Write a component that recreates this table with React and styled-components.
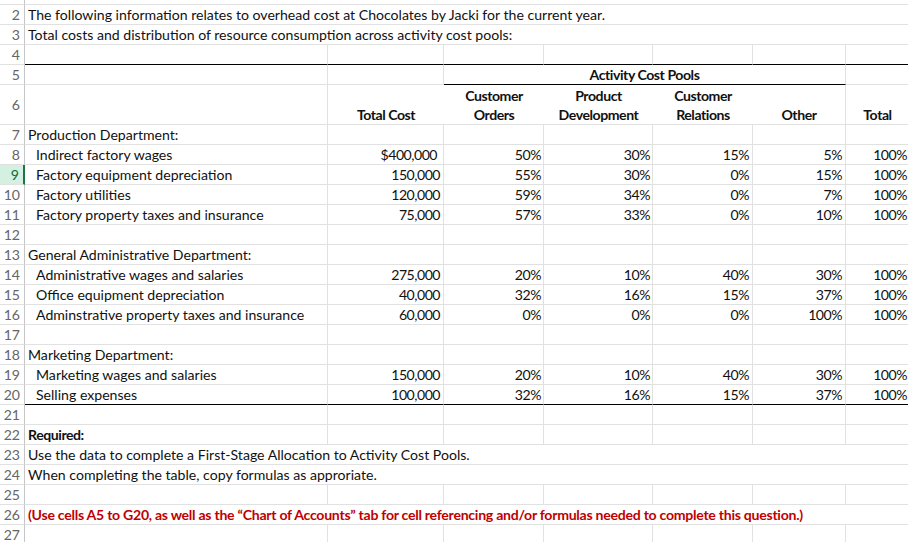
import styled, { createGlobalStyle } from 'styled-components';

const GlobalStyle = createGlobalStyle`
    body {
        margin: 0;
        overflow: hidden;
        background: #ffffff;
        font-family: 'Lato', 'Liberation Sans', sans-serif;
        font-size: 14.1px;
        color: #111;
    }
`;

const GRID = '#e1e1e1';

const Sheet = styled.div`
    width: 910px;
`;

const Row = styled.div`
    display: grid;
    grid-template-columns: 25px 303px 116px 100px 109px 100px 93px 64px;
    grid-template-rows: ${(p) => p.$h || 20}px;
    height: ${(p) => p.$h || 20}px;
`;

const RowHead = styled.div`
    box-sizing: border-box;
    display: flex;
    align-items: center;
    justify-content: flex-end;
    padding-right: 4px;
    color: ${(p) => (p.$active ? '#0b6a36' : '#666')};
    background: ${(p) => (p.$active ? '#d3f0e0' : '#fff')};
    border-right: ${(p) => (p.$active ? '2px solid #217346' : '1px solid #c6c6c6')};
    border-bottom: 1px solid ${GRID};
`;

const Cell = styled.div`
    box-sizing: border-box;
    grid-column: ${(p) => p.$span || 'auto'};
    padding: 0 ${(p) => p.$pr ?? 3}px 0 ${(p) => p.$pl ?? 3}px;
    line-height: 19px;
    white-space: nowrap;
    text-align: ${(p) => p.$align || 'left'};
    font-weight: ${(p) => (p.$bold ? 700 : 400)};
    letter-spacing: ${(p) => p.$ls || (p.$bold ? '-0.45px' : 'normal')};
    color: ${(p) => p.$color || '#111'};
    border-right: ${(p) => (p.$noRight ? 'none' : `1px solid ${GRID}`)};
    border-bottom: 1px solid ${(p) => (p.$line ? '#000' : GRID)};
`;

const NumCell = styled(Cell)`
    text-align: right;
    letter-spacing: -0.5px;
`;

const HeadCell = styled(Cell)`
    display: flex;
    flex-direction: column;
    justify-content: flex-end;
    align-items: center;
    font-weight: 700;
    letter-spacing: -0.45px;
`;

const rows = [
    { n: 7, label: 'Production Department:' },
    { n: 8, label: 'Indirect factory wages', v: ['$400,000', '50%', '30%', '15%', '5%', '100%'], dollar: true },
    { n: 9, label: 'Factory equipment depreciation', v: ['150,000', '55%', '30%', '0%', '15%', '100%'], active: true },
    { n: 10, label: 'Factory utilities', v: ['120,000', '59%', '34%', '0%', '7%', '100%'] },
    { n: 11, label: 'Factory property taxes and insurance', v: ['75,000', '57%', '33%', '0%', '10%', '100%'] },
    { n: 12 },
    { n: 13, label: 'General Administrative Department:' },
    { n: 14, label: 'Administrative wages and salaries', v: ['275,000', '20%', '10%', '40%', '30%', '100%'] },
    { n: 15, label: 'Office equipment depreciation', v: ['40,000', '32%', '16%', '15%', '37%', '100%'] },
    { n: 16, label: 'Adminstrative property taxes and insurance', v: ['60,000', '0%', '0%', '0%', '100%', '100%'] },
    { n: 17 },
    { n: 18, label: 'Marketing Department:' },
    { n: 19, label: 'Marketing wages and salaries', v: ['150,000', '20%', '10%', '40%', '30%', '100%'] },
    { n: 20, label: 'Selling expenses', v: ['100,000', '32%', '16%', '15%', '37%', '100%'], line: true },
    { n: 21 },
    { n: 22, label: 'Required:', bold: true },
];

// right padding per value column, B..G
const padRight = [3, 2, 2, 3, 3, 2];

function DataRow({ r }) {
    const vals = r.v || ['', '', '', '', '', ''];
    return (
        <Row>
            <RowHead $active={r.active}>{r.n}</RowHead>
            <Cell $pl={r.v ? 11 : 3} $bold={r.bold} $line={r.line}>{r.label}</Cell>
            {vals.map((x, i) => (
                <NumCell key={i} $pr={i === 0 && r.dollar ? 6 : padRight[i]} $line={r.line}>{x}</NumCell>
            ))}
        </Row>
    );
}

function NoteRow({ n, children, bold, color, ls }) {
    return (
        <Row>
            <RowHead>{n}</RowHead>
            <Cell $span="2 / -1" $noRight $bold={bold} $color={color} $ls={ls}>{children}</Cell>
        </Row>
    );
}

function EmptyRow({ n, line }) {
    return (
        <Row>
            <RowHead>{n}</RowHead>
            {[0, 1, 2, 3, 4, 5, 6].map((i) => <Cell key={i} $line={line} />)}
        </Row>
    );
}

export default function App() {
    return (
        <Sheet>
            <GlobalStyle />
            <Row $h={5}>
                <RowHead />
                <Cell $span="2 / -1" $noRight />
            </Row>
            <NoteRow n={2}>The following information relates to overhead cost at Chocolates by Jacki for the current year.</NoteRow>
            <NoteRow n={3}>Total costs and distribution of resource consumption across activity cost pools:</NoteRow>
            <EmptyRow n={4} line />
            <Row>
                <RowHead>5</RowHead>
                <Cell />
                <Cell />
                <Cell $span="span 4" $align="center" $bold $line>Activity Cost Pools</Cell>
                <Cell />
            </Row>
            <Row $h={40}>
                <RowHead>6</RowHead>
                <Cell />
                <HeadCell $noRight>Total Cost</HeadCell>
                <HeadCell $noRight><span>Customer</span><span>Orders</span></HeadCell>
                <HeadCell $noRight><span>Product</span><span>Development</span></HeadCell>
                <HeadCell $noRight><span>Customer</span><span>Relations</span></HeadCell>
                <HeadCell>Other</HeadCell>
                <HeadCell>Total</HeadCell>
            </Row>
            {rows.map((r) => (r.label || r.v ? <DataRow key={r.n} r={r} /> : <EmptyRow key={r.n} n={r.n} />))}
            <NoteRow n={23}>Use the data to complete a First-Stage Allocation to Activity Cost Pools.</NoteRow>
            <NoteRow n={24}>When completing the table, copy formulas as approriate.</NoteRow>
            <EmptyRow n={25} />
            <NoteRow n={26} bold color="#c00000" ls="-0.27px">(Use cells A5 to G20, as well as the “Chart of Accounts” tab for cell referencing and/or formulas needed to complete this question.)</NoteRow>
            <EmptyRow n={27} />
        </Sheet>
    );
}
